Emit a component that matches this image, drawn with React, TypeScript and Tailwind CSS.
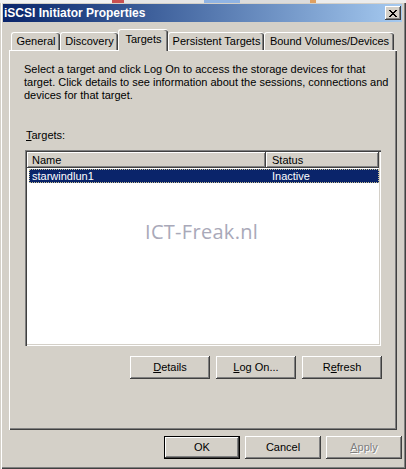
import React from "react";

const raised =
  "bg-[#d4d0c8] shadow-[inset_-1px_-1px_#404040,inset_1px_1px_#ffffff,inset_-2px_-2px_#808080]";

function Btn({ children, w = "w-[80px]", def = false }: { children: React.ReactNode; w?: string; def?: boolean }) {
  if (def) {
    return (
      <div className={`${w} h-[23px] border border-black`}>
        <div className={`w-full h-full flex items-center justify-center ${raised}`}>{children}</div>
      </div>
    );
  }
  return <div className={`${w} h-[23px] flex items-center justify-center ${raised}`}>{children}</div>;
}

function Tab({ label, w, selected = false }: { label: string; w: string; selected?: boolean }) {
  if (selected) {
    return (
      <div
        className={`${w} h-[22px] -mb-[1px] relative z-10 bg-[#d4d0c8] rounded-t-[3px] border-l border-t border-white shadow-[inset_-1px_0_#404040,inset_-2px_0_#808080] flex items-start justify-center pt-[3px]`}
      >
        {label}
      </div>
    );
  }
  return (
    <div
      className={`${w} h-[18px] bg-[#d4d0c8] rounded-t-[3px] border-l border-t border-white shadow-[inset_-1px_0_#404040,inset_-2px_0_#808080] flex items-start justify-center pt-[2px]`}
    >
      {label}
    </div>
  );
}

export default function App() {
  return (
    <div className="w-[406px] h-[469px] overflow-hidden relative bg-[#d4d0c8] text-black text-[11px] leading-[13px] font-['Liberation_Sans',Arial,sans-serif]">
      {/* strip of what's behind the window */}
      <div className="flex h-[3px]">
        <div className="w-[112px] bg-[#f2f2f2]" />
        <div className="w-[12px] bg-[#c85050]" />
        <div className="w-[80px] bg-[#e6e6e6]" />
        <div className="w-[36px] bg-[#90b4e4]" />
        <div className="w-[70px] bg-[#dcdcdc]" />
        <div className="w-[6px] bg-[#e0a060]" />
        <div className="flex-1 bg-[#ececec]" />
      </div>

      {/* window */}
      <div className="h-[466px] pt-[1px] pl-[3px] pr-[4px] shadow-[inset_1px_0_#d4d0c8,inset_2px_0_#ffffff,inset_-1px_-1px_#404040,inset_-2px_-2px_#808080]">
        {/* title bar */}
        <div className="h-[18px] flex items-center justify-between bg-gradient-to-r from-[#0a246a] to-[#a6caf0] pl-[1px] pr-[1px]">
          <span className="text-white font-bold text-[12px] leading-[14px]">iSCSI Initiator Properties</span>
          <div className={`w-[16px] h-[14px] flex items-center justify-center ${raised}`}>
            <svg width="8" height="7" viewBox="0 0 8 7" shapeRendering="crispEdges">
              <path
                d="M0 0h2v1h-2zM6 0h2v1h-2zM1 1h2v1h-2zM5 1h2v1h-2zM2 2h4v1h-4zM3 3h2v1h-2zM2 4h4v1h-4zM1 5h2v1h-2zM5 5h2v1h-2zM0 6h2v1h-2zM6 6h2v1h-2z"
                fill="#000"
              />
            </svg>
          </div>
        </div>

        {/* tabs */}
        <div className="flex items-end h-[21px] mt-[7px] ml-[8px]">
          <Tab label="General" w="w-[49px]" />
          <Tab label="Discovery" w="w-[58px]" />
          <Tab label="Targets" w="w-[50px]" selected />
          <Tab label="Persistent Targets" w="w-[96px]" />
          <Tab label="Bound Volumes/Devices" w="w-[130px]" />
        </div>

        {/* panel */}
        <div className="ml-[6px] w-[388px] h-[380px] flex flex-col pl-[15px] pr-[15px] pt-[13px] shadow-[inset_1px_1px_#ffffff,inset_-1px_-1px_#404040,inset_-2px_-2px_#808080]">
          <div className="whitespace-nowrap">
            Select a target and click Log On to access the storage devices for that
            <br />
            target. Click details to see information about the sessions, connections and
            <br />
            devices for that target.
          </div>
          <div className="mt-[27px] ml-[2px]">
            <span className="underline">T</span>argets:
          </div>
          <div className="mt-[8px] ml-[1px] w-[356px] h-[196px] bg-white relative p-[2px] shadow-[inset_1px_1px_#808080,inset_2px_2px_#404040,inset_-1px_-1px_#ffffff,inset_-2px_-2px_#d4d0c8]">
            <div className="flex h-[16px]">
              <div className={`w-[239px] h-full flex items-center pl-[5px] ${raised}`}>Name</div>
              <div className={`flex-1 h-full flex items-center pl-[6px] ${raised}`}>Status</div>
            </div>
            <div className="mt-[1px] ml-[2px] h-[14px] flex items-center bg-[#0a246a] text-white border border-dotted border-[#c8c090]">
              <span className="w-[240px] pl-[2px]">starwindlun1</span>
              <span className="pl-[2px]">Inactive</span>
            </div>
          </div>
          <div className="mt-[10px] flex justify-end gap-[6px] pr-[0px]">
            <Btn>
              <span className="underline">D</span>etails
            </Btn>
            <Btn>
              <span className="underline">L</span>og On...
            </Btn>
            <Btn>
              R<span className="underline">e</span>fresh
            </Btn>
          </div>
        </div>

        {/* bottom buttons */}
        <div className="mt-[6px] flex justify-end gap-[5px] pr-[0px]">
          <Btn w="w-[76px]" def>
            OK
          </Btn>
          <Btn w="w-[76px]">Cancel</Btn>
          <Btn w="w-[76px]">
            <span className="text-[#808080] [text-shadow:1px_1px_#ffffff]">
              <span className="underline">A</span>pply
            </span>
          </Btn>
        </div>
      </div>

      {/* watermark */}
      <div className="absolute left-[145px] top-[222px] text-[20px] leading-[20px] tracking-[0.3px] text-[#a9a9b9] font-['Open_Sans',sans-serif]">
        ICT-Freak.nl
      </div>
    </div>
  );
}
